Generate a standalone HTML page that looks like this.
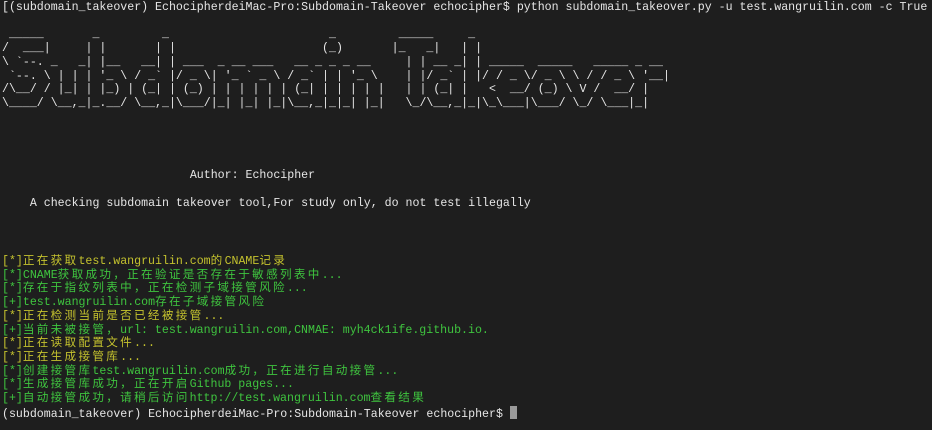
<!DOCTYPE html>
<html><head><meta charset="utf-8"><style>
html,body{margin:0;padding:0;background:#1e1e1e;width:932px;height:430px;overflow:hidden}
pre{margin:0;position:absolute;left:2px;font-family:"Liberation Mono","Noto Sans CJK SC",monospace;font-size:11.6px;line-height:13.7px;color:#e6e6e6;white-space:pre}
.y{color:#c4c22e}.g{color:#3fc43f}
.c{letter-spacing:2.3px}
.cur{display:inline-block;width:7px;height:13px;background:#9a9a9a;vertical-align:-2px}
</style></head><body><pre style="top:1px">[(subdomain_takeover) EchocipherdeiMac-Pro:Subdomain-Takeover echocipher$ python subdomain_takeover.py -u test.wangruilin.com -c True

 _____       _         _                       _         _____     _
/  ___|     | |       | |                     (_)       |_   _|   | |
\ `--. _   _| |__   __| | ___  _ __ ___   __ _ _ _ __     | | __ _| | _____  _____   _____ _ __
 `--. \ | | | '_ \ / _` |/ _ \| '_ ` _ \ / _` | | '_ \    | |/ _` | |/ / _ \/ _ \ \ / / _ \ '__|
/\__/ / |_| | |_) | (_| | (_) | | | | | | (_| | | | | |   | | (_| |   &lt;  __/ (_) \ V /  __/ |
\____/ \__,_|_.__/ \__,_|\___/|_| |_| |_|\__,_|_|_| |_|   \_/\__,_|_|\_\___|\___/ \_/ \___|_|</pre>
<pre style="top:169px">                           Author: Echocipher</pre>
<pre style="top:197px">    A checking subdomain takeover tool,For study only, do not test illegally</pre>
<pre style="top:255px"><span class="y">[*]<span class="c">正在获取</span>test.wangruilin.com<span class="c">的</span>CNAME<span class="c">记录</span></span>
<span class="g">[*]CNAME<span class="c">获取成功，正在验证是否存在于敏感列表中</span>...</span>
<span class="g">[*]<span class="c">存在于指纹列表中，正在检测子域接管风险</span>...</span>
<span class="g">[+]test.wangruilin.com<span class="c">存在子域接管风险</span></span>
<span class="y">[*]<span class="c">正在检测当前是否已经被接管</span>...</span>
<span class="g">[+]<span class="c">当前未被接管，</span>url: test.wangruilin.com,CNMAE: myh4ck1ife.github.io.</span>
<span class="y">[*]<span class="c">正在读取配置文件</span>...</span>
<span class="y">[*]<span class="c">正在生成接管库</span>...</span>
<span class="g">[*]<span class="c">创建接管库</span>test.wangruilin.com<span class="c">成功，正在进行自动接管</span>...</span>
<span class="g">[*]<span class="c">生成接管库成功，正在开启</span>Github pages...</span>
<span class="g">[+]<span class="c">自动接管成功，请稍后访问</span>http://test.wangruilin.com<span class="c">查看结果</span></span>
(subdomain_takeover) EchocipherdeiMac-Pro:Subdomain-Takeover echocipher$ <span class="cur"></span></pre>
</body></html>
